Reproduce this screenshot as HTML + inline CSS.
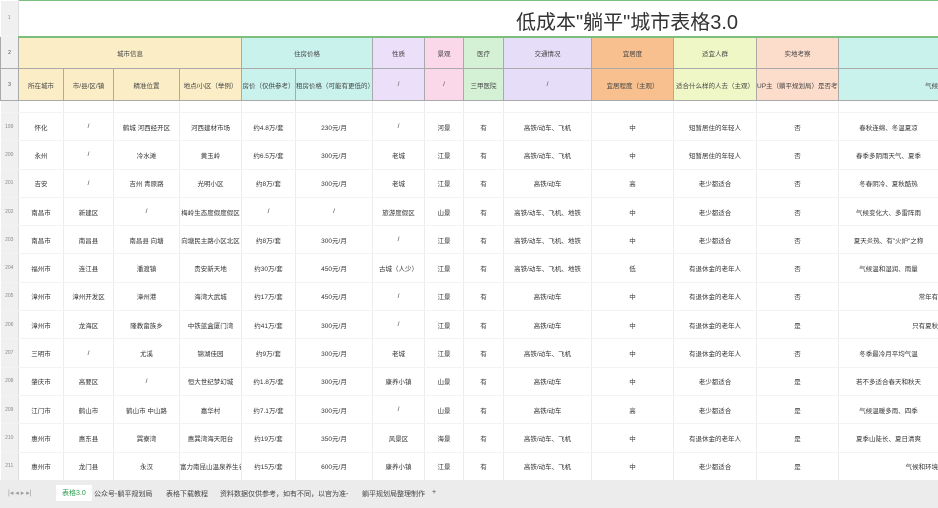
<!DOCTYPE html><html><head><meta charset="utf-8"><style>
*{margin:0;padding:0;box-sizing:border-box}
body{width:938px;height:508px;overflow:hidden;background:#fff;font-family:"Liberation Sans","Noto Sans CJK SC",sans-serif;color:#333;position:relative}
table{position:absolute;left:0;top:0;border-collapse:collapse;table-layout:fixed;width:938px}
td{font-size:6.5px;text-align:center;white-space:nowrap;overflow:hidden;border-right:1px solid #ececec;border-bottom:1px solid #f3f3f3}
td.n{background:#f0f0f0;color:#888;font-size:5px;border-right:1px solid #ddd}
.h td{border:1px solid #aaa;color:#444}
.y{background:#fbeec6}.c{background:#caf2ec}.l{background:#ecdffa}.p{background:#fbd7ea}.g{background:#d5f1d5}.v{background:#e6ddf8}.o{background:#f8c08e}.e{background:#eff7c6}.k{background:#fcdcca}
.tabs{position:absolute;left:0;top:480px;width:938px;height:28px;background:#ececec;font-size:7px;color:#444}
.tabs span{position:absolute;top:9px}
</style></head><body>
<table>
<colgroup><col style="width:18px"><col style="width:45px"><col style="width:50px"><col style="width:66px"><col style="width:62px"><col style="width:54px"><col style="width:77px"><col style="width:52px"><col style="width:39px"><col style="width:40px"><col style="width:88px"><col style="width:82px"><col style="width:83px"><col style="width:82px"><col style="width:100px"></colgroup>
<tr style="height:36px"><td class="n">1</td><td colspan="14" style="border:1px solid #7cbf7c;border-bottom:2px solid #7cbf7c;font-size:20px;text-align:left;padding-left:497px;padding-top:4px;color:#333">低成本"躺平"城市表格3.0</td></tr>
<tr class="h" style="height:32px"><td class="n">2</td><td colspan="4" class="y">城市信息</td><td colspan="2" class="c">住房价格</td><td class="l">性质</td><td class="p">景观</td><td class="g">医疗</td><td class="v">交通情况</td><td class="o">宜居度</td><td class="e">适宜人群</td><td class="k">实地考察</td><td class="c"></td></tr>
<tr class="h" style="height:32px"><td class="n">3</td><td class="y">所在城市</td><td class="y">市/县/区/镇</td><td class="y">精准位置</td><td class="y">地点/小区（举例）</td><td class="c">房价（仅供参考）</td><td class="c">租房价格（可能有更低的）</td><td class="l">/</td><td class="p">/</td><td class="g">三甲医院</td><td class="v">/</td><td class="o">宜居程度（主观）</td><td class="e">适合什么样的人去（主观）</td><td class="k">UP主（躺平规划局）是否考察</td><td class="c" style="text-align:right">气候</td></tr>
<tr style="height:12px"><td class="n"></td><td></td><td></td><td></td><td></td><td></td><td></td><td></td><td></td><td></td><td></td><td></td><td></td><td></td><td></td></tr>
<tr style="height:28.3px"><td class="n">199</td><td>怀化</td><td>/</td><td>鹤城 河西经开区</td><td>河西建材市场</td><td>约4.8万/套</td><td>230元/月</td><td>/</td><td>河景</td><td>有</td><td>高铁/动车、飞机</td><td>中</td><td>短暂居住的年轻人</td><td>否</td><td>春秋连绵、冬温夏凉</td></tr>
<tr style="height:28.3px"><td class="n">200</td><td>永州</td><td>/</td><td>冷水滩</td><td>黄玉岭</td><td>约6.5万/套</td><td>300元/月</td><td>老城</td><td>江景</td><td>有</td><td>高铁/动车、飞机</td><td>中</td><td>短暂居住的年轻人</td><td>否</td><td>春季多阴雨天气、夏季</td></tr>
<tr style="height:28.3px"><td class="n">201</td><td>吉安</td><td>/</td><td>吉州 青原路</td><td>光明小区</td><td>约8万/套</td><td>300元/月</td><td>老城</td><td>江景</td><td>有</td><td>高铁/动车</td><td>高</td><td>老少都适合</td><td>否</td><td>冬春阴冷、夏秋酷热</td></tr>
<tr style="height:28.3px"><td class="n">202</td><td>南昌市</td><td>新建区</td><td>/</td><td>梅岭生态度假度假区</td><td>/</td><td>/</td><td>旅游度假区</td><td>山景</td><td>有</td><td>高铁/动车、飞机、地铁</td><td>中</td><td>老少都适合</td><td>否</td><td>气候变化大、多雷阵雨</td></tr>
<tr style="height:28.3px"><td class="n">203</td><td>南昌市</td><td>南昌县</td><td>南昌县 向塘</td><td>向塘民主路小区北区</td><td>约8万/套</td><td>300元/月</td><td>/</td><td>江景</td><td>有</td><td>高铁/动车、飞机、地铁</td><td>中</td><td>老少都适合</td><td>否</td><td>夏天炎热、有"火炉"之称</td></tr>
<tr style="height:28.3px"><td class="n">204</td><td>福州市</td><td>连江县</td><td>潘渡镇</td><td>贵安新天地</td><td>约30万/套</td><td>450元/月</td><td>古城（人少）</td><td>江景</td><td>有</td><td>高铁/动车、飞机、地铁</td><td>低</td><td>有退休金的老年人</td><td>否</td><td>气候温和湿润、雨量</td></tr>
<tr style="height:28.3px"><td class="n">205</td><td>漳州市</td><td>漳州开发区</td><td>漳州港</td><td>海湾大武城</td><td>约17万/套</td><td>450元/月</td><td>/</td><td>江景</td><td>有</td><td>高铁/动车</td><td>中</td><td>有退休金的老年人</td><td>否</td><td style="text-align:right">常年有</td></tr>
<tr style="height:28.3px"><td class="n">206</td><td>漳州市</td><td>龙海区</td><td>隆教畲族乡</td><td>中铁蓝盒厦门湾</td><td>约41万/套</td><td>300元/月</td><td>/</td><td>江景</td><td>有</td><td>高铁/动车</td><td>中</td><td>有退休金的老年人</td><td>是</td><td style="text-align:right">只有夏秋</td></tr>
<tr style="height:28.3px"><td class="n">207</td><td>三明市</td><td>/</td><td>尤溪</td><td>锦湖佳园</td><td>约9万/套</td><td>300元/月</td><td>老城</td><td>江景</td><td>有</td><td>高铁/动车、飞机</td><td>中</td><td>有退休金的老年人</td><td>否</td><td>冬季最冷月平均气温</td></tr>
<tr style="height:28.3px"><td class="n">208</td><td>肇庆市</td><td>高要区</td><td>/</td><td>恒大世纪梦幻城</td><td>约1.8万/套</td><td>300元/月</td><td>康养小镇</td><td>山景</td><td>有</td><td>高铁/动车</td><td>中</td><td>老少都适合</td><td>是</td><td>若不多适合春天和秋天</td></tr>
<tr style="height:28.3px"><td class="n">209</td><td>江门市</td><td>鹤山市</td><td>鹤山市 中山路</td><td>嘉华村</td><td>约7.1万/套</td><td>300元/月</td><td>/</td><td>山景</td><td>有</td><td>高铁/动车</td><td>高</td><td>老少都适合</td><td>是</td><td>气候温暖多雨、四季</td></tr>
<tr style="height:28.3px"><td class="n">210</td><td>惠州市</td><td>惠东县</td><td>巽寮湾</td><td>惠巽湾海天阳台</td><td>约19万/套</td><td>350元/月</td><td>风景区</td><td>海景</td><td>有</td><td>高铁/动车、飞机</td><td>中</td><td>有退休金的老年人</td><td>是</td><td>夏季山陡长、夏日清爽</td></tr>
<tr style="height:28.3px"><td class="n">211</td><td>惠州市</td><td>龙门县</td><td>永汉</td><td>富力南昆山温泉养生谷</td><td>约15万/套</td><td>600元/月</td><td>康养小镇</td><td>江景</td><td>有</td><td>高铁/动车、飞机</td><td>中</td><td>老少都适合</td><td>是</td><td style="text-align:right">气候和环境</td></tr>
</table>
<div class="tabs">
<span style="left:8px;color:#999">|◂ ◂ ▸ ▸|</span>
<span style="left:56px;top:5px;background:#fff;color:#2a9d4a;padding:3px 6px">表格3.0</span>
<span style="left:94px">公众号-躺平规划局</span>
<span style="left:166px">表格下载教程</span>
<span style="left:220px">资料数据仅供参考，如有不同，以官为准-</span>
<span style="left:362px">躺平规划局整理制作</span>
<span style="left:432px">+</span>
</div>
</body></html>
